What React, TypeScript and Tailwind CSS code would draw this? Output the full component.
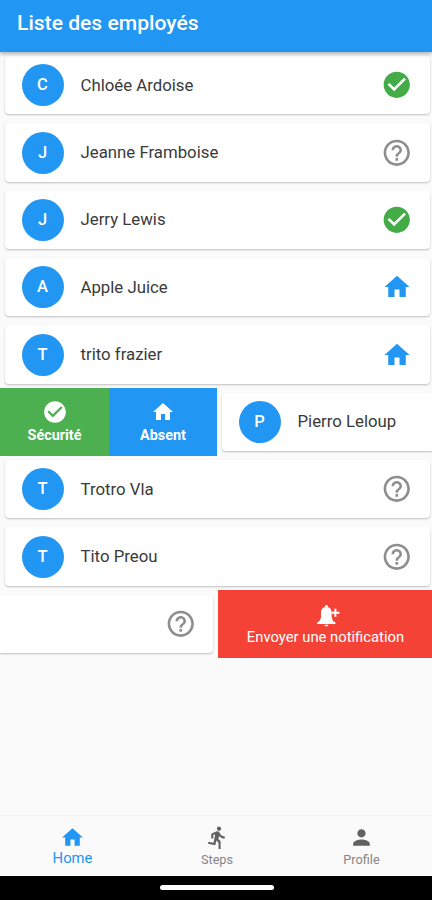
import { MdCheckCircle, MdDirectionsRun, MdHelpOutline, MdHome, MdPerson } from 'react-icons/md'

type Status = 'safe' | 'absent' | 'unknown'

interface Employee {
  name: string
  status: Status
}

const employees: Employee[] = [
  { name: 'Chloée Ardoise', status: 'safe' },
  { name: 'Jeanne Framboise', status: 'unknown' },
  { name: 'Jerry Lewis', status: 'safe' },
  { name: 'Apple Juice', status: 'absent' },
  { name: 'trito frazier', status: 'absent' },
]

const moreEmployees: Employee[] = [
  { name: 'Trotro Vla', status: 'unknown' },
  { name: 'Tito Preou', status: 'unknown' },
]

function StatusIcon({ status }: { status: Status }) {
  if (status === 'safe') return <MdCheckCircle className="size-[31.5px] text-[#43ac47]" />
  if (status === 'absent') return <MdHome className="size-[30px] mr-[0.5px] text-[#2196f3]" />
  return <MdHelpOutline className="size-[31.5px] text-[#8e8e8e]" />
}

function BellPlusIcon() {
  return (
    <svg viewBox="0 0 24 24" className="size-[25px] ml-1.5 mt-px" fill="currentColor">
      <path d="M10 22.5c1 0 1.800-.7 1.800-1.600H8.200c0 .9.800 1.600 1.800 1.600z" />
      <path d="M16.500 17.500c-.8-1.700-1.500-3-1.500-4.800V9c0-2.300-1.300-4.500-3.600-5.200v-.5c0-.8-.6-1.400-1.400-1.400s-1.400.6-1.400 1.400v.5C6 4.500 4.800 6.700 4.800 9v3.700c0 2-.8 3.500-1.700 4.800L1.200 18.700v1.500h17.500v-1.500z" />
      <path d="M17.600 5.500h2v2.900h2.900v2h-2.900v2.900h-2v-2.900h-2.500v-2h2.500z" />
    </svg>
  )
}

function EmployeeInfo({ name }: { name: string }) {
  return (
    <>
      <div className="size-[42px] shrink-0 rounded-full bg-[#2196f3] flex items-center justify-center pt-px text-white text-[16.5px] font-medium">
        {name[0].toUpperCase()}
      </div>
      <span className="ml-[17px] flex-1 text-[16.8px] text-[#3a3a3a] whitespace-nowrap">{name}</span>
    </>
  )
}

function EmployeeRow({ employee }: { employee: Employee }) {
  return (
    <div className="h-[67.35px] pt-[4.5px] pb-[4.5px] pl-[5px] pr-[2.5px]">
      <div className="h-full flex items-center rounded-[4px] bg-white pl-[16.5px] pr-[17px] shadow-[0_1px_2px_rgba(0,0,0,0.24)]">
        <EmployeeInfo name={employee.name} />
        <StatusIcon status={employee.status} />
      </div>
    </div>
  )
}

export default function App() {
  return (
    <div className="w-[432px] h-[900px] flex flex-col overflow-hidden bg-[#fafafa] font-[Roboto,sans-serif]">
      <header className="relative z-10 h-[51.5px] shrink-0 bg-[#2196f3] pl-[17px] pt-[9px] shadow-[0_2px_4px_rgba(0,0,0,0.3)]">
        <h1 className="text-[21.1px] leading-[28px] font-medium text-white">Liste des employés</h1>
      </header>

      <main className="flex-1 flex flex-col">
        {employees.map(e => <EmployeeRow key={e.name} employee={e} />)}

        {/* Swiped right: status actions */}
        <div className="h-[67.35px] flex">
          <div className="w-[109px] bg-[#4caf50] text-white flex flex-col items-center justify-center">
            <MdCheckCircle className="size-[26px]" />
            <span className="text-[14.4px] leading-[19px] pt-px font-bold">Sécurité</span>
          </div>
          <div className="w-[108px] bg-[#2196f3] text-white flex flex-col items-center justify-center">
            <MdHome className="size-[24px] my-px" />
            <span className="text-[14.4px] leading-[19px] pt-px font-bold">Absent</span>
          </div>
          <div className="flex-1 pt-[4.5px] pb-[4.5px] pl-[5px]">
            <div className="h-full flex items-center rounded-l-[4px] bg-white pl-[16.5px] shadow-[0_1px_2px_rgba(0,0,0,0.24)]">
              <EmployeeInfo name="Pierro Leloup" />
            </div>
          </div>
        </div>

        {moreEmployees.map(e => <EmployeeRow key={e.name} employee={e} />)}

        {/* Swiped left: notification action */}
        <div className="h-[67.35px] flex">
          <div className="flex-1 pt-[4.5px] pb-[4.5px] pr-[5px]">
            <div className="h-full flex items-center justify-end rounded-r-[4px] bg-white pr-[17px] shadow-[0_1px_2px_rgba(0,0,0,0.24)]">
              <StatusIcon status="unknown" />
            </div>
          </div>
          <div className="w-[214px] bg-[#f44336] text-white flex flex-col items-center justify-center">
            <BellPlusIcon />
            <span className="text-[14.8px] leading-[18px] pl-px">Envoyer une notification</span>
          </div>
        </div>
      </main>

      <nav className="h-[61px] shrink-0 grid grid-cols-3 border-t border-[#f0f0f0] text-[#616161]">
        <div className="flex flex-col items-center pt-[9px] pl-px text-[#2196f3]">
          <MdHome className="size-[25px]" />
          <span className="text-[14.8px] leading-[17px]">Home</span>
        </div>
        <div className="flex flex-col items-center pt-[9px] pl-[2px]">
          <MdDirectionsRun className="size-[25px]" />
          <span className="text-[12.7px] leading-[19px] text-[#858585]">Steps</span>
        </div>
        <div className="flex flex-col items-center pt-[9px] pl-[3px]">
          <MdPerson className="size-[25px]" />
          <span className="text-[12.7px] leading-[19px] text-[#858585]">Profile</span>
        </div>
      </nav>

      <div className="h-[24.5px] shrink-0 bg-black flex justify-center pt-[9.5px] pl-[2px]">
        <div className="w-[114px] h-[5px] rounded-full bg-white" />
      </div>
    </div>
  )
}
